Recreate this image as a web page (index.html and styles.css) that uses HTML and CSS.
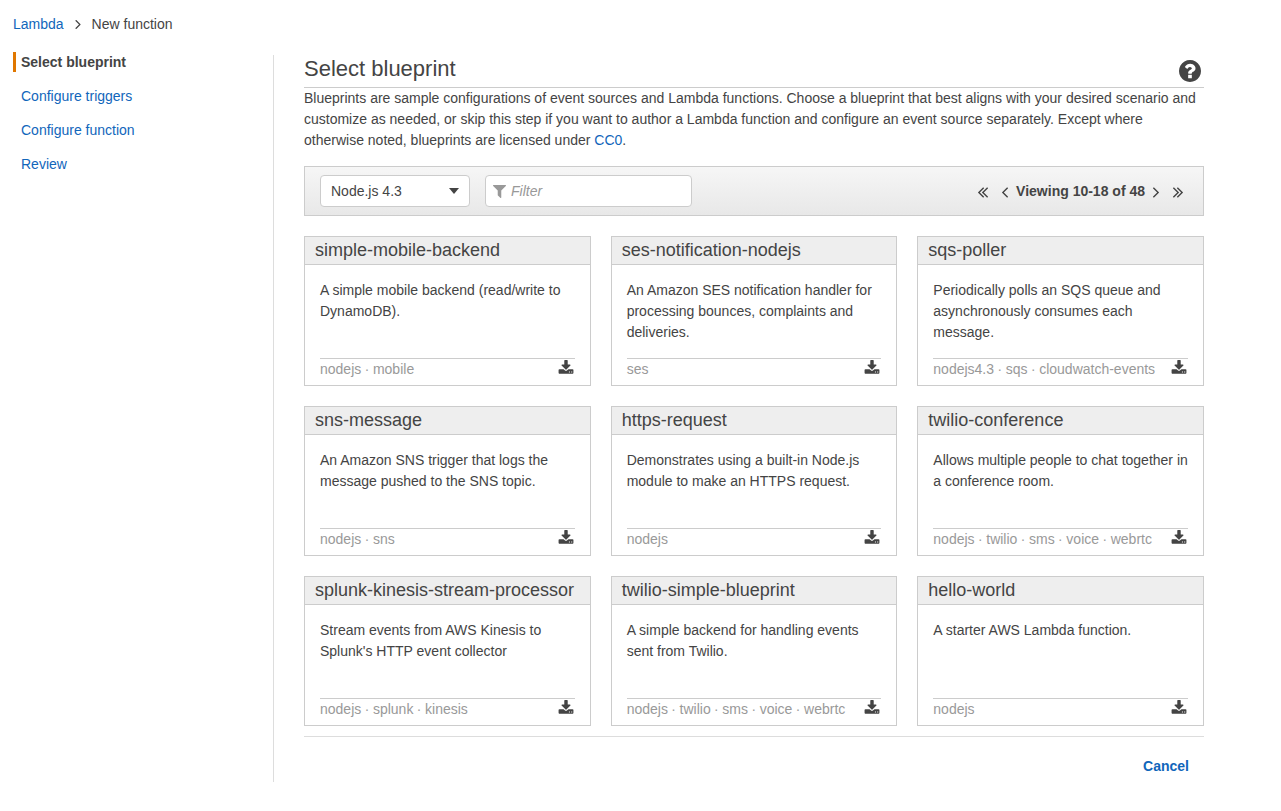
FILE: index.html
```html
<!DOCTYPE html>
<html lang="en">
<head>
<meta charset="utf-8">
<meta name="viewport" content="width=device-width, initial-scale=1">
<title>Lambda - New function</title>
<link rel="stylesheet" href="styles.css">
</head>
<body>
<svg class="sprite" aria-hidden="true">
  <symbol id="angle-right" viewBox="589 461 582 998"><path d="M1171 960q0 13-10 23l-466 466q-10 10-23 10t-23-10l-50-50q-10-10-10-23t10-23l393-393-393-393q-10-10-10-23t10-23l50-50q10-10 23-10t23 10l466 466q10 10 10 23z"/></symbol>
  <symbol id="angle-left" viewBox="621 461 582 998"><path d="M1203 544q0 13-10 23l-393 393 393 393q10 10 10 23t-10 23l-50 50q-10 10-23 10t-23-10l-466-466q-10-10-10-23t10-23l466-466q10-10 23-10t23 10l50 50q10 10 10 23z"/></symbol>
  <symbol id="double-right" viewBox="589 461 966 998"><path d="M1171 960q0 13-10 23l-466 466q-10 10-23 10t-23-10l-50-50q-10-10-10-23t10-23l393-393-393-393q-10-10-10-23t10-23l50-50q10-10 23-10t23 10l466 466q10 10 10 23zm384 0q0 13-10 23l-466 466q-10 10-23 10t-23-10l-50-50q-10-10-10-23t10-23l393-393-393-393q-10-10-10-23t10-23l50-50q10-10 23-10t23 10l466 466q10 10 10 23z"/></symbol>
  <symbol id="double-left" viewBox="621 461 966 998"><path d="M1203 544q0 13-10 23l-393 393 393 393q10 10 10 23t-10 23l-50 50q-10 10-23 10t-23-10l-466-466q-10-10-10-23t10-23l466-466q10-10 23-10t23 10l50 50q10 10 10 23zm384 0q0 13-10 23l-393 393 393 393q10 10 10 23t-10 23l-50 50q-10 10-23 10t-23-10l-466-466q-10-10-10-23t10-23l466-466q10-10 23-10t23 10l50 50q10 10 10 23z"/></symbol>
  <symbol id="question" viewBox="128 128 1536 1536"><path d="M1024 1376v-192q0-14-9-23t-23-9h-192q-14 0-23 9t-9 23v192q0 14 9 23t23 9h192q14 0 23-9t9-23zm256-672q0-88-55.5-163t-138.5-116-170-41q-243 0-371 213-15 24 8 42l132 100q7 6 19 6 16 0 25-12 53-68 86-92 34-24 86-24 48 0 85.5 26t37.5 59q0 38-20 61t-68 45q-63 28-115.5 86.5t-52.5 125.5v36q0 14 9 23t23 9h192q14 0 23-9t9-23q0-19 21.5-49.5t54.5-49.5q32-18 49-28.5t46-35 44.5-48 28-60.5 12.5-81zm384 192q0 209-103 385.5t-279.5 279.5-385.5 103-385.5-103-279.5-279.5-103-385.5 103-385.5 279.5-279.5 385.5-103 385.5 103 279.5 279.5 103 385.5z"/></symbol>
  <symbol id="filter-icon" viewBox="192 256 1408 1408"><path d="M1595 295q17 41-14 70l-493 493v742q0 42-39 59-13 5-25 5-27 0-45-19l-256-256q-19-19-19-45v-486l-493-493q-31-29-14-70 17-39 59-39h1280q42 0 59 39z"/></symbol>
  <symbol id="download" viewBox="0 0 1792 1792"><path d="M1344 1344q0-26-19-45t-45-19-45 19-19 45 19 45 45 19 45-19 19-45zm256 0q0-26-19-45t-45-19-45 19-19 45 19 45 45 19 45-19 19-45zm128-224v320q0 40-28 68t-68 28h-1472q-40 0-68-28t-28-68v-320q0-40 28-68t68-28h465l135 136q58 56 136 56t136-56l136-136h464q40 0 68 28t28 68zm-325-569q17 41-14 70l-448 448q-18 19-45 19t-45-19l-448-448q-31-29-14-70 17-39 59-39h256v-448q0-26 19-45t45-19h256q26 0 45 19t19 45v448h256q42 0 59 39z"/></symbol>
</svg>

<div class="page">
  <nav class="breadcrumb" aria-label="Breadcrumb">
    <a href="#">Lambda</a>
    <svg class="crumb-arrow" aria-hidden="true"><use href="#angle-right"/></svg>
    <span>New function</span>
  </nav>

  <div class="layout">
    <nav class="steps" aria-label="Steps">
      <a class="step current" href="#" aria-current="step">Select blueprint</a>
      <a class="step" href="#">Configure triggers</a>
      <a class="step" href="#">Configure function</a>
      <a class="step" href="#">Review</a>
    </nav>

    <main class="main">
      <header class="heading">
        <h1>Select blueprint</h1>
        <button class="icon-button" type="button" aria-label="Help"><svg class="help-icon"><use href="#question"/></svg></button>
      </header>
      <p class="intro">Blueprints are sample configurations of event sources and Lambda functions. Choose a blueprint that best aligns with your desired scenario and customize as needed, or skip this step if you want to author a Lambda function and configure an event source separately. Except where otherwise noted, blueprints are licensed under <a href="#">CC0</a>.</p>

      <div class="toolbar">
        <div class="select-wrap">
          <select class="control runtime" aria-label="Runtime"><option>Node.js 4.3</option></select>
          <span class="caret"></span>
        </div>
        <label class="control filter">
          <svg class="filter-icon" aria-hidden="true"><use href="#filter-icon"/></svg>
          <input type="text" placeholder="Filter" aria-label="Filter">
        </label>
        <div class="pager">
          <button class="icon-button first" type="button" aria-label="First page"><svg class="double"><use href="#double-left"/></svg></button>
          <button class="icon-button" type="button" aria-label="Previous page"><svg class="single"><use href="#angle-left"/></svg></button>
          <strong>Viewing 10-18 of 48</strong>
          <button class="icon-button" type="button" aria-label="Next page"><svg class="single"><use href="#angle-right"/></svg></button>
          <button class="icon-button last" type="button" aria-label="Last page"><svg class="double"><use href="#double-right"/></svg></button>
        </div>
      </div>

      <section class="cards" aria-label="Blueprints">
        <article class="card">
          <h2>simple-mobile-backend</h2>
          <p>A simple mobile backend (read/write to DynamoDB).</p>
          <footer><span>nodejs ∙ mobile</span><button class="icon-button" type="button" aria-label="Download"><svg class="download"><use href="#download"/></svg></button></footer>
        </article>
        <article class="card">
          <h2>ses-notification-nodejs</h2>
          <p>An Amazon SES notification handler for processing bounces, complaints and deliveries.</p>
          <footer><span>ses</span><button class="icon-button" type="button" aria-label="Download"><svg class="download"><use href="#download"/></svg></button></footer>
        </article>
        <article class="card">
          <h2>sqs-poller</h2>
          <p>Periodically polls an SQS queue and asynchronously consumes each message.</p>
          <footer><span>nodejs4.3 ∙ sqs ∙ cloudwatch-events</span><button class="icon-button" type="button" aria-label="Download"><svg class="download"><use href="#download"/></svg></button></footer>
        </article>
        <article class="card">
          <h2>sns-message</h2>
          <p>An Amazon SNS trigger that logs the message pushed to the SNS topic.</p>
          <footer><span>nodejs ∙ sns</span><button class="icon-button" type="button" aria-label="Download"><svg class="download"><use href="#download"/></svg></button></footer>
        </article>
        <article class="card">
          <h2>https-request</h2>
          <p>Demonstrates using a built-in Node.js module to make an HTTPS request.</p>
          <footer><span>nodejs</span><button class="icon-button" type="button" aria-label="Download"><svg class="download"><use href="#download"/></svg></button></footer>
        </article>
        <article class="card">
          <h2>twilio-conference</h2>
          <p>Allows multiple people to chat together in a conference room.</p>
          <footer><span>nodejs ∙ twilio ∙ sms ∙ voice ∙ webrtc</span><button class="icon-button" type="button" aria-label="Download"><svg class="download"><use href="#download"/></svg></button></footer>
        </article>
        <article class="card">
          <h2>splunk-kinesis-stream-processor</h2>
          <p>Stream events from AWS Kinesis to Splunk's HTTP event collector</p>
          <footer><span>nodejs ∙ splunk ∙ kinesis</span><button class="icon-button" type="button" aria-label="Download"><svg class="download"><use href="#download"/></svg></button></footer>
        </article>
        <article class="card">
          <h2>twilio-simple-blueprint</h2>
          <p>A simple backend for handling events sent from Twilio.</p>
          <footer><span>nodejs ∙ twilio ∙ sms ∙ voice ∙ webrtc</span><button class="icon-button" type="button" aria-label="Download"><svg class="download"><use href="#download"/></svg></button></footer>
        </article>
        <article class="card">
          <h2>hello-world</h2>
          <p>A starter AWS Lambda function.</p>
          <footer><span>nodejs</span><button class="icon-button" type="button" aria-label="Download"><svg class="download"><use href="#download"/></svg></button></footer>
        </article>
      </section>

      <div class="actions"><a href="#">Cancel</a></div>
    </main>
  </div>
</div>
</body>
</html>
```
FILE: styles.css
```css
*, *::before, *::after { box-sizing: border-box; }

body {
  margin: 0;
  background: #fff;
  color: #444;
  font: 14px/21px "Liberation Sans", Arial, sans-serif;
}

h1, h2, p { margin: 0; font-weight: normal; }
a { color: #1166bb; text-decoration: none; }
a:hover { text-decoration: underline; }
svg { display: block; fill: #444; }
.sprite { display: none; }

.icon-button {
  display: block;
  padding: 0;
  border: 0;
  background: none;
  cursor: pointer;
}

.page { padding: 14px 13px 29px; }

.breadcrumb {
  display: flex;
  align-items: center;
  gap: 11px;
}
.crumb-arrow { width: 6px; height: 9px; }

.layout {
  display: flex;
  align-items: stretch;
  padding-top: 20px;
}

.steps {
  display: flex;
  flex-direction: column;
  flex: 0 0 260px;
  gap: 14px;
  margin-top: -3px;
}
.step {
  padding-left: 5px;
  border-left: 3px solid transparent;
  line-height: 20px;
}
.step.current {
  border-left-color: #e07700;
  color: #444;
  font-weight: bold;
}

.main {
  flex: 0 1 931px;
  min-width: 0;
  padding-left: 30px;
  border-left: 1px solid #ddd;
}

.heading {
  display: flex;
  align-items: flex-end;
  justify-content: space-between;
  padding: 0 3px 5px 0;
  border-bottom: 1px solid #ccc;
}
.heading h1 { font-size: 22px; line-height: 27px; }
.help-icon { width: 22px; height: 22px; }

.toolbar {
  display: flex;
  align-items: center;
  gap: 15px;
  margin: 15px 0 20px;
  padding: 8px 20px 8px 15px;
  border: 1px solid #ccc;
  background: linear-gradient(#f6f6f6, #e8e8e8);
}
.control {
  height: 32px;
  border: 1px solid #ccc;
  border-radius: 4px;
  background: #fff;
}
.select-wrap { position: relative; }
.runtime {
  appearance: none;
  display: block;
  width: 150px;
  padding: 0 10px;
  color: #444;
  font: inherit;
}
.caret {
  position: absolute;
  top: 13px;
  right: 11px;
  border: 5px solid transparent;
  border-top: 6px solid #444;
  border-bottom: 0;
  pointer-events: none;
}
.filter {
  display: flex;
  align-items: center;
  gap: 5px;
  width: 207px;
  padding: 0 7px;
}
.filter-icon { flex: none; width: 13px; height: 13px; fill: #999; }
.filter input {
  flex: 1;
  min-width: 0;
  padding: 0;
  border: 0;
  outline: 0;
  background: none;
  color: #444;
  font: inherit;
}
.filter input::placeholder { color: #999; font-style: italic; }

.pager {
  display: flex;
  align-items: center;
  gap: 8px;
  margin-left: auto;
}
.pager svg { height: 11px; margin-top: 3px; }
.single { width: 6px; }
.double { width: 10px; }
.first { margin-right: 6px; }
.last { margin-left: 6px; }

.cards {
  display: grid;
  grid-template-columns: repeat(3, minmax(0, 1fr));
  gap: 20px;
}
.card {
  display: flex;
  flex-direction: column;
  min-height: 150px;
  border: 1px solid #ccc;
}
.card h2 {
  padding: 0 10px 1px;
  border-bottom: 1px solid #ccc;
  background: #eee;
  font-size: 18px;
  line-height: 26px;
}
.card p { flex: 1; padding: 15px 15px 0; }
.card footer {
  display: flex;
  justify-content: space-between;
  margin: 0 15px 5px;
  padding-right: 1px;
  border-top: 1px solid #ccc;
  color: #999;
}
.card footer .icon-button { align-self: flex-start; padding-top: 1px; }
.download { width: 16px; height: 16px; }

.actions {
  margin-top: 10px;
  padding: 19px 15px 5px;
  border-top: 1px solid #ddd;
  font-weight: bold;
  text-align: right;
}
```
